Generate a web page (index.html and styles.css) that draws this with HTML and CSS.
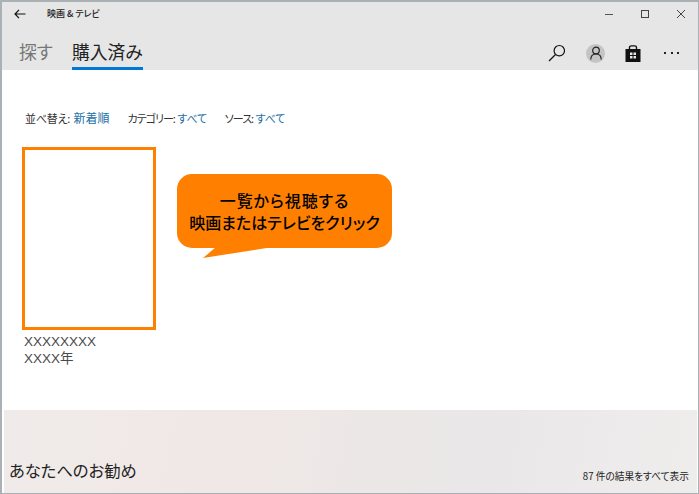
FILE: index.html
```html
<!DOCTYPE html>
<html lang="ja">
<head>
  <meta charset="UTF-8">
  <meta name="viewport" content="width=device-width, initial-scale=1.0">
  <title>映画 &amp; テレビ</title>
  <link rel="stylesheet" href="styles.css">
</head>
<body>
  <div class="window">

    <header class="app-header">
      <div class="title-bar">
        <svg class="back-icon" width="12" height="10" viewBox="0 0 12 10"><path d="M5 .8 1 5l4 4.2M1 5h10.500" fill="none" stroke="#111" stroke-width="1.200"/></svg>
        <span class="app-title">映画 &amp; テレビ</span>
        <div class="window-controls">
          <svg width="10" height="10" viewBox="0 0 10 10"><path d="M1 5.500h8" stroke="#555" stroke-width="1"/></svg>
          <svg width="10" height="10" viewBox="0 0 10 10"><rect x="1.500" y="1.500" width="7" height="7" fill="none" stroke="#444" stroke-width="1"/></svg>
          <svg width="10" height="10" viewBox="0 0 10 10"><path d="M1 1l8 8M9 1l-8 8" stroke="#444" stroke-width="1"/></svg>
        </div>
      </div>
      <div class="nav-row">
        <nav class="tabs">
          <a class="tab">探す</a>
          <a class="tab active">購入済み</a>
        </nav>
        <div class="toolbar">
          <svg width="18" height="18" viewBox="0 0 18 18"><circle cx="11.300" cy="6.700" r="5.200" fill="none" stroke="#111" stroke-width="1.200"/><path d="M7.500 10.500 1 17" stroke="#111" stroke-width="1.300"/></svg>
          <span class="avatar">
            <svg width="12" height="14" viewBox="0 0 12 14"><circle cx="6" cy="4.500" r="3.300" fill="none" stroke="#222" stroke-width="1.200"/><path d="M.8 13.500c0-3.600 2-5.500 5.200-5.500s5.200 1.900 5.200 5.500" fill="none" stroke="#222" stroke-width="1.200"/></svg>
          </span>
          <svg width="16" height="17" viewBox="0 0 16 17"><path d="M4.500 4V2.600C4.500 1.500 5.300.9 6.300.9h3.400c1 0 1.800.6 1.800 1.700V4" fill="none" stroke="#111" stroke-width="1.400"/><path fill-rule="evenodd" d="M.5 4h15v13H.5zM5 7.500v2.500h2.500V7.500zm3.500 0v2.500H11V7.500zM5 11v2.500h2.500V11zm3.500 0v2.500H11V11z" fill="#111"/></svg>
          <span class="more"><i></i><i></i><i></i></span>
        </div>
      </div>
    </header>

    <main class="content">
      <div class="filters">
        <span>並べ替え: <a class="filter-value wide">新着順</a></span>
        <span class="filter-tight">カテゴリー: <a class="filter-value">すべて</a></span>
        <span class="filter-tight">ソース: <a class="filter-value">すべて</a></span>
      </div>

      <div class="item">
        <div class="poster"></div>
        <div class="item-name">XXXXXXXX</div>
        <div class="item-name">XXXX年</div>
      </div>

      <div class="callout">
        <p><span class="callout-first">一覧から視聴する</span><br>映画またはテレビをクリック</p>
        <svg class="callout-tail" width="70" height="12" viewBox="0 0 70 12"><path d="M13 0 0 11 70 0z" fill="#ff8000"/></svg>
      </div>
    </main>

    <section class="recommend">
      <h2>あなたへのお勧め</h2>
      <a class="see-all">87 件の結果をすべて表示</a>
    </section>

  </div>
</body>
</html>
```

FILE: styles.css
```css
* {
  box-sizing: border-box;
}
html, body {
  height: 100%;
}
body {
  margin: 0;
  font-family: 'Noto Sans CJK JP', 'Liberation Sans', sans-serif;
  font-feature-settings: 'palt';
  background-color: #ffffff;
  color: #333333;
}
.window {
  height: 494px;
  display: flex;
  flex-direction: column;
  border: 1px solid #a9b1b5;
  border-width: 2px 1px 1px 2px;
  background-color: #ffffff;
}

/* header */
.app-header {
  height: 68px;
  background-color: #e6e6e6;
  flex-shrink: 0;
}
.title-bar {
  height: 23px;
  display: flex;
  align-items: center;
  padding-left: 12px;
}
.back-icon {
  margin-right: 21px;
}
.app-title {
  font-size: 9px;
  font-weight: 500;
  color: #222222;
}
.window-controls {
  margin-left: auto;
  display: flex;
  gap: 26px;
  padding-right: 12px;
}
.nav-row {
  height: 45px;
  display: flex;
  justify-content: space-between;
  padding: 0 19px 0 17px;
}
.tabs {
  display: flex;
  gap: 19px;
}
.tab {
  font-size: 17.800px;
  line-height: 52px;
  height: 45px;
  color: #767676;
}
.tab.active {
  color: #222222;
  border-bottom: 3px solid #0078d7;
}
.toolbar {
  display: flex;
  align-items: center;
  gap: 20px;
  padding-top: 11px;
}
.avatar {
  width: 19px;
  height: 19px;
  border-radius: 50%;
  background-color: #c4c4c4;
  display: flex;
  align-items: center;
  justify-content: center;
}
.more {
  display: flex;
  gap: 4.500px;
  margin-left: 3px;
}
.more i {
  width: 2px;
  height: 2px;
  background-color: #222222;
}

/* list */
.content {
  flex: 1;
  position: relative;
  padding: 39px 0 0 20px;
}
.filters {
  display: flex;
  gap: 18px;
  font-size: 11px;
  letter-spacing: -0.2px;
  line-height: 18px;
  padding-left: 3px;
  color: #333333;
}
.filter-tight {
  letter-spacing: -1px;
}
.filter-value {
  color: #1a6fa8;
  margin-left: 1px;
  letter-spacing: -0.2px;
}
.filter-value.wide {
  font-size: 12px;
  letter-spacing: 0;
}
.item {
  margin-top: 20px;
}
.poster {
  width: 134px;
  height: 183px;
  border: 3px solid #ff8000;
  background-color: #ffffff;
}
.item-name {
  font-family: 'Liberation Sans', 'Noto Sans CJK JP', sans-serif;
  font-size: 13.500px;
  line-height: 17px;
  padding-left: 2px;
  color: #4a4a4a;
}
.poster + .item-name {
  margin-top: 3px;
}
.callout {
  position: absolute;
  left: 175px;
  top: 104px;
  width: 215px;
  height: 74px;
  background-color: #ff8000;
  border-radius: 15px;
  display: flex;
  align-items: center;
  justify-content: center;
}
.callout p {
  margin: 0;
  text-align: center;
  font-size: 16px;
  line-height: 22px;
  font-weight: 500;
  color: #000000;
}
.callout-first {
  letter-spacing: 0.9px;
}
.callout-tail {
  position: absolute;
  left: 26px;
  top: 73px;
}

/* bottom band */
.recommend {
  height: 83px;
  margin-left: 2px;
  margin-right: 1px;
  flex-shrink: 0;
  display: flex;
  justify-content: space-between;
  align-items: flex-end;
  padding: 0 8px 9px 5px;
  background: linear-gradient(100deg, #f0ebea 0%, #f0e8e6 30%, #e9e7e8 70%, #efedec 100%);
}
.recommend h2 {
  margin: 0 0 2px;
  font-size: 16.300px;
  font-weight: 400;
  line-height: 24px;
  color: #222222;
}
.see-all {
  font-size: 9.700px;
  line-height: 16px;
  color: #222222;
}
```
